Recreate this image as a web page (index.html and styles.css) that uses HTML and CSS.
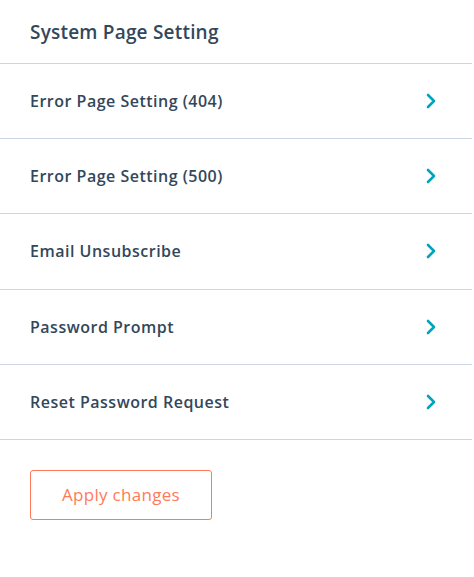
FILE: index.html
```html
<!DOCTYPE html>
<html lang="en">
<head>
    <meta charset="UTF-8">
    <meta name="viewport" content="width=device-width, initial-scale=1.0">
    <title>System Page Setting</title>
    <link rel="stylesheet" href="styles.css">
</head>
<body>
    <div class="panel">
        <h2 class="panel-title">System Page Setting</h2>
        <ul class="setting-list">
            <li class="setting-row">
                <span>Error Page Setting (404)</span>
                <svg class="chevron" width="10" height="16" viewBox="0 0 10 16"><path d="M2 2l6 6-6 6" fill="none" stroke="currentColor" stroke-width="2.6" stroke-linecap="round" stroke-linejoin="round"/></svg>
            </li>
            <li class="setting-row">
                <span>Error Page Setting (500)</span>
                <svg class="chevron" width="10" height="16" viewBox="0 0 10 16"><path d="M2 2l6 6-6 6" fill="none" stroke="currentColor" stroke-width="2.6" stroke-linecap="round" stroke-linejoin="round"/></svg>
            </li>
            <li class="setting-row">
                <span>Email Unsubscribe</span>
                <svg class="chevron" width="10" height="16" viewBox="0 0 10 16"><path d="M2 2l6 6-6 6" fill="none" stroke="currentColor" stroke-width="2.6" stroke-linecap="round" stroke-linejoin="round"/></svg>
            </li>
            <li class="setting-row">
                <span>Password Prompt</span>
                <svg class="chevron" width="10" height="16" viewBox="0 0 10 16"><path d="M2 2l6 6-6 6" fill="none" stroke="currentColor" stroke-width="2.6" stroke-linecap="round" stroke-linejoin="round"/></svg>
            </li>
            <li class="setting-row">
                <span>Reset Password Request</span>
                <svg class="chevron" width="10" height="16" viewBox="0 0 10 16"><path d="M2 2l6 6-6 6" fill="none" stroke="currentColor" stroke-width="2.6" stroke-linecap="round" stroke-linejoin="round"/></svg>
            </li>
        </ul>
        <div class="actions">
            <button class="apply-btn">Apply changes</button>
        </div>
    </div>
</body>
</html>
```

FILE: styles.css
```css
body {
    margin: 0;
    background: #fff;
    font-family: "Open Sans", Lato, sans-serif;
    color: #33475b;
}
.panel {
    width: 472px;
}
.panel-title {
    margin: 0;
    height: 64px;
    padding: 0 30px;
    display: flex;
    align-items: center;
    font-size: 19px;
    font-weight: 600;
    letter-spacing: 0.2px;
    border-bottom: 1px solid #cbd6e2;
    box-sizing: border-box;
}
.setting-list {
    list-style: none;
    margin: 0;
    padding: 0;
}
.setting-row {
    height: 74.2px;
    display: flex;
    align-items: center;
    justify-content: space-between;
    padding: 0 36px 0 30px;
    font-size: 16px;
    font-weight: 600;
    letter-spacing: 0.5px;
    border-bottom: 1px solid #cbd6e2;
}
.chevron {
    color: #00a4bd;
}
.actions {
    padding: 30px 30px;
}
.apply-btn {
    width: 182px;
    height: 50px;
    background: #fff;
    border: 1px solid #ff7a59;
    border-radius: 3px;
    color: #ff7a59;
    font-family: "Open Sans", Lato, sans-serif;
    font-size: 17px;
    letter-spacing: 0.3px;
}
```
